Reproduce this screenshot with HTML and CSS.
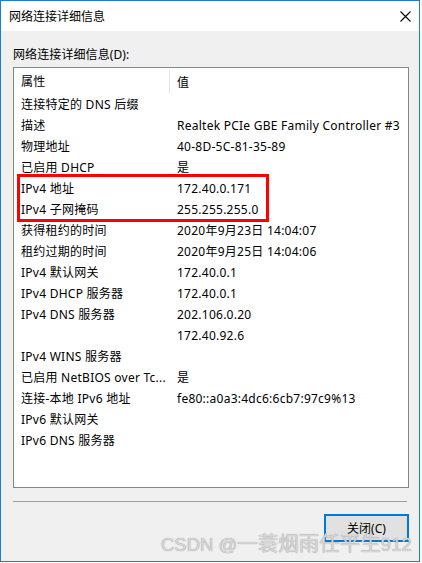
FILE: index.html
```html
<!DOCTYPE html>
<html>
<head>
<meta charset="utf-8">
<link rel="stylesheet" href="styles.css">
</head>
<body>
<div class="window">
  <div class="titlebar">
    <span class="title">网络连接详细信息</span>
    <svg class="close" width="11" height="11" viewBox="0 0 11 11"><path d="M0.5 0.5 L10.5 10.5 M10.5 0.5 L0.5 10.5" stroke="#000" stroke-width="1.1" fill="none"/></svg>
  </div>
  <div class="content">
    <div class="label">网络连接详细信息(D):</div>
    <div class="listbox">
      <div class="header">
        <div class="c1">属性</div>
        <div class="c2">值</div>
      </div>
      <div class="row"><div class="c1">连接特定的 DNS 后缀</div><div class="c2"></div></div>
      <div class="row"><div class="c1">描述</div><div class="c2">Realtek PCIe GBE Family Controller #3</div></div>
      <div class="row"><div class="c1">物理地址</div><div class="c2">40-8D-5C-81-35-89</div></div>
      <div class="row"><div class="c1">已启用 DHCP</div><div class="c2">是</div></div>
      <div class="row"><div class="c1">IPv4 地址</div><div class="c2">172.40.0.171</div></div>
      <div class="row"><div class="c1">IPv4 子网掩码</div><div class="c2">255.255.255.0</div></div>
      <div class="row"><div class="c1">获得租约的时间</div><div class="c2">2020年9月23日 14:04:07</div></div>
      <div class="row"><div class="c1">租约过期的时间</div><div class="c2">2020年9月25日 14:04:06</div></div>
      <div class="row"><div class="c1">IPv4 默认网关</div><div class="c2">172.40.0.1</div></div>
      <div class="row"><div class="c1">IPv4 DHCP 服务器</div><div class="c2">172.40.0.1</div></div>
      <div class="row"><div class="c1">IPv4 DNS 服务器</div><div class="c2">202.106.0.20</div></div>
      <div class="row"><div class="c1"></div><div class="c2">172.40.92.6</div></div>
      <div class="row"><div class="c1">IPv4 WINS 服务器</div><div class="c2"></div></div>
      <div class="row"><div class="c1">已启用 NetBIOS over Tc...</div><div class="c2">是</div></div>
      <div class="row"><div class="c1">连接-本地 IPv6 地址</div><div class="c2">fe80::a0a3:4dc6:6cb7:97c9%13</div></div>
      <div class="row"><div class="c1">IPv6 默认网关</div><div class="c2"></div></div>
      <div class="row"><div class="c1">IPv6 DNS 服务器</div><div class="c2"></div></div>
      <div class="highlight"></div>
    </div>
    <div class="separator"></div>
    <div class="footer">
      <button class="btn">关闭(C)</button>
    </div>
  </div>
  <div class="watermark">CSDN @<span class="wm-cjk">一蓑烟雨任平生</span>912</div>
</div>
</body>
</html>
```

FILE: styles.css
```css
* { box-sizing: border-box; }
html, body { margin: 0; padding: 0; background: #fff; }
body {
  font-family: "Noto Sans", "Noto Sans CJK SC", sans-serif;
  font-size: 12px;
  color: #000;
}
.window {
  position: relative;
  width: 420px;
  height: 562px;
  border: 1px solid #1a7fd4;
  display: flex;
  flex-direction: column;
  background: #f0f0f0;
}
.titlebar {
  height: 30px;
  background: #fff;
  display: flex;
  align-items: center;
  justify-content: space-between;
  padding: 2px 8px 0 8px;
}
.title { font-size: 12px; line-height: 16px; }
.close { margin-top: -1px; }
.content {
  flex: 1;
  display: flex;
  flex-direction: column;
  padding: 16px 10px 0 12px;
}
.label { line-height: 16px; height: 20px; letter-spacing: 0.1px; }
.listbox {
  position: relative;
  height: 421px;
  background: #fff;
  border: 1px solid #828790;
  padding-top: 2px;
  letter-spacing: 0.25px;
}
.header {
  display: flex;
  height: 24px;
  align-items: center;
}
.header .c1 { border-right: 1px solid #e5e5e5; height: 24px; line-height: 24px; }
.row { display: flex; height: 21px; line-height: 21px; }
.c1 {
  width: 156px;
  padding-left: 7px;
  white-space: nowrap;
  overflow: hidden;
}
.c2 { padding-left: 7px; white-space: nowrap; }
.highlight {
  position: absolute;
  left: 3px;
  top: 106px;
  width: 252px;
  height: 48px;
  border: 3px solid #f00;
}
.separator {
  margin-top: 13px;
  height: 1px;
  width: 394px;
  background: #a0a0a0;
}
.footer {
  display: flex;
  justify-content: flex-end;
  padding-top: 12px;
}
.btn {
  width: 85px;
  height: 28px;
  margin-right: 0;
  background: #e1e1e1;
  border: 2px solid #0078d7;
  font-family: "Noto Sans", "Noto Sans CJK SC", sans-serif;
  font-size: 12px;
  color: #000;
  padding: 0;
}
.watermark {
  position: absolute;
  left: 160px;
  top: 531px;
  font-family: "Liberation Sans", "Noto Sans CJK SC", sans-serif;
  font-size: 18.5px;
  line-height: 24px;
  color: #d6d6d6;
  text-shadow: 0 0 1px #8a8a8a;
  white-space: nowrap;
}
.wm-cjk { font-size: 20.5px; }
```
